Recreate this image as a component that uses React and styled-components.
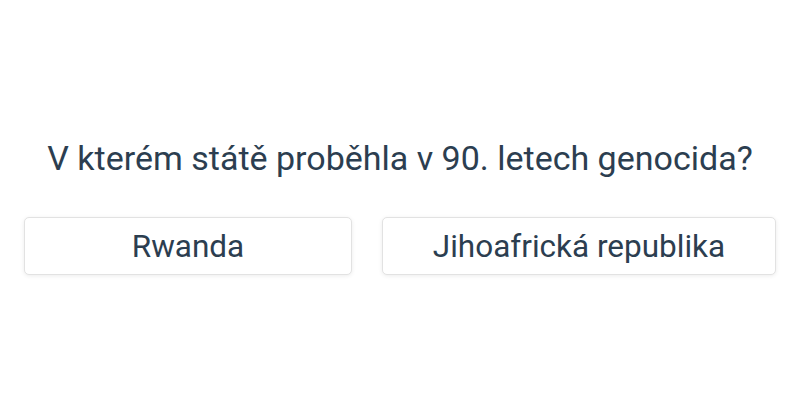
import React from "react";
import styled, { createGlobalStyle } from "styled-components";

const GlobalStyle = createGlobalStyle`
  html, body {
    margin: 0;
    padding: 0;
    background: #ffffff;
  }
  body {
    font-family: Roboto, "Noto Sans", sans-serif;
    color: #2c3e50;
  }
`;

const Page = styled.div`
  height: 400px;
  display: flex;
  flex-direction: column;
  justify-content: center;
  padding: 13px 24px 0 24px;
  box-sizing: border-box;
`;

const Question = styled.h1`
  margin: 0 0 39px 0;
  font-size: 34px;
  font-weight: 400;
  text-align: center;
  line-height: 40px;
`;

const Answers = styled.div`
  display: flex;
  gap: 30px;
`;

const Answer = styled.button`
  flex: 0 0 ${({ $width }) => $width}px;
  height: 58px;
  box-sizing: border-box;
  background: #ffffff;
  border: 1px solid #e2e2e2;
  border-radius: 5px;
  box-shadow: 0 1px 4px rgba(0, 0, 0, 0.08);
  font-family: Roboto, "Noto Sans", sans-serif;
  font-size: 31.5px;
  color: #2c3e50;
  cursor: pointer;
`;

const answers = [
  { text: "Rwanda", width: 328 },
  { text: "Jihoafrická republika", width: 394 },
];

export default function App() {
  return (
    <>
      <GlobalStyle />
      <Page>
        <Question>V kterém státě proběhla v 90. letech genocida?</Question>
        <Answers>
          {answers.map((a) => (
            <Answer key={a.text} $width={a.width}>
              {a.text}
            </Answer>
          ))}
        </Answers>
      </Page>
    </>
  );
}
